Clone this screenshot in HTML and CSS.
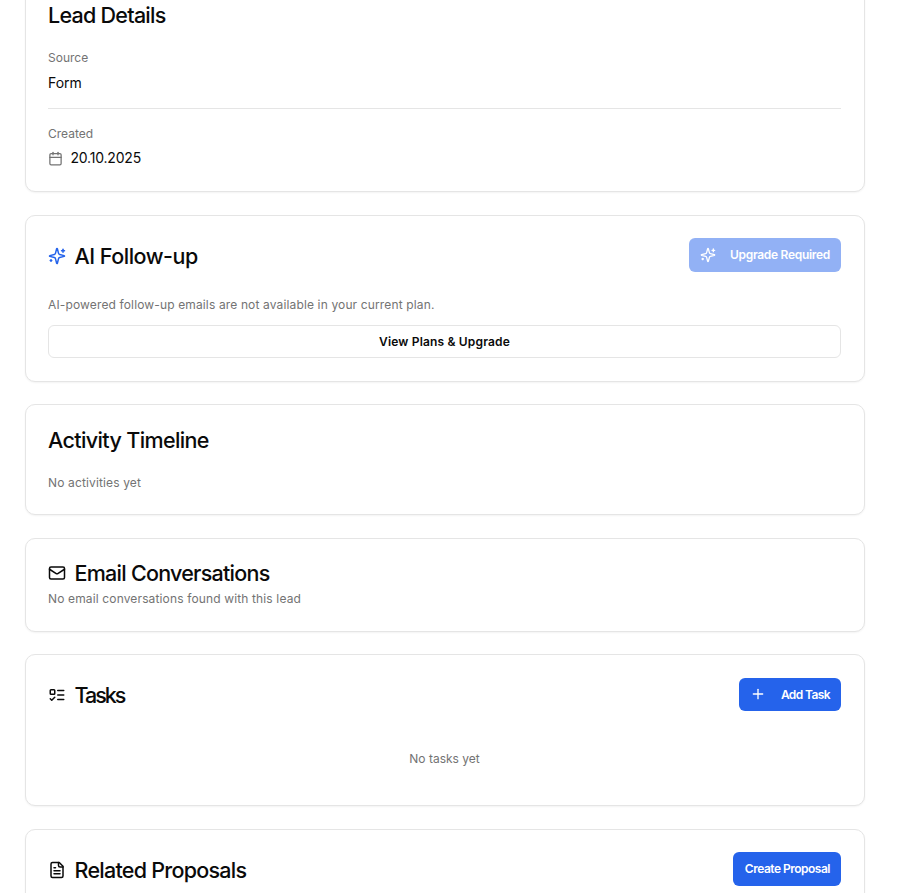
FILE: index.html
```html
<!DOCTYPE html>
<html lang="en">
<head>
<meta charset="utf-8">
<title>Lead</title>
<link rel="stylesheet" href="styles.css">
</head>
<body>
<main class="stack">
  <section class="card details">
    <h2 class="title">Lead Details</h2>
    <div class="field">
      <div class="label">Source</div>
      <div class="value">Form</div>
    </div>
    <hr class="rule">
    <div class="field">
      <div class="label second">Created</div>
      <div class="value date">
        <svg class="ico-date" viewBox="0 0 24 24" fill="none" stroke="currentColor" stroke-width="2" stroke-linecap="round" stroke-linejoin="round"><path d="M8 2v4"/><path d="M16 2v4"/><rect x="3" y="4" width="18" height="18" rx="2"/><path d="M3 10h18"/></svg>
        <span>20.10.2025</span>
      </div>
    </div>
  </section>

  <section class="card ai">
    <div class="head">
      <h2 class="title with-icon">
        <svg class="ico blue" viewBox="0 0 24 24" fill="none" stroke="currentColor" stroke-width="2" stroke-linecap="round" stroke-linejoin="round"><path d="M9.937 15.5A2 2 0 0 0 8.5 14.063l-6.135-1.582a.5.5 0 0 1 0-.962L8.5 9.936A2 2 0 0 0 9.937 8.5l1.582-6.135a.5.5 0 0 1 .963 0L14.063 8.5A2 2 0 0 0 15.5 9.937l6.135 1.581a.5.5 0 0 1 0 .964L15.5 14.063a2 2 0 0 0-1.437 1.437l-1.582 6.135a.5.5 0 0 1-.963 0z"/><path d="M20 3v4"/><path d="M22 5h-4"/><path d="M4 17v2"/><path d="M5 18H3"/></svg>
        <span class="ai-name">AI Follow-up</span>
      </h2>
      <button class="btn disabled" type="button">
        <svg class="ico-btn" viewBox="0 0 24 24" fill="none" stroke="currentColor" stroke-width="2" stroke-linecap="round" stroke-linejoin="round"><path d="M9.937 15.5A2 2 0 0 0 8.5 14.063l-6.135-1.582a.5.5 0 0 1 0-.962L8.5 9.936A2 2 0 0 0 9.937 8.5l1.582-6.135a.5.5 0 0 1 .963 0L14.063 8.5A2 2 0 0 0 15.5 9.937l6.135 1.581a.5.5 0 0 1 0 .964L15.5 14.063a2 2 0 0 0-1.437 1.437l-1.582 6.135a.5.5 0 0 1-.963 0z"/><path d="M20 3v4"/><path d="M22 5h-4"/><path d="M4 17v2"/><path d="M5 18H3"/></svg>
        <span>Upgrade Required</span>
      </button>
    </div>
    <p class="muted ai-text">AI-powered follow-up emails are not available in your current plan.</p>
    <button class="btn-outline" type="button">View Plans &amp; Upgrade</button>
  </section>

  <section class="card timeline">
    <h2 class="title">Activity Timeline</h2>
    <p class="muted timeline-text">No activities yet</p>
  </section>

  <section class="card email">
    <h2 class="title with-icon">
      <svg class="ico" viewBox="0 0 24 24" fill="none" stroke="currentColor" stroke-width="2" stroke-linecap="round" stroke-linejoin="round"><rect x="2" y="4" width="20" height="16" rx="2"/><path d="m22 7-8.97 5.7a1.94 1.94 0 0 1-2.06 0L2 7"/></svg>
      <span>Email Conversations</span>
    </h2>
    <p class="muted email-text">No email conversations found with this lead</p>
  </section>

  <section class="card tasks">
    <div class="head">
      <h2 class="title with-icon">
        <svg class="ico" viewBox="0 0 24 24" fill="none" stroke="currentColor" stroke-width="2" stroke-linecap="round" stroke-linejoin="round"><rect x="3" y="5" width="6" height="6" rx="1"/><path d="m3 17 2 2 4-4"/><path d="M13 6h8"/><path d="M13 12h8"/><path d="M13 18h8"/></svg>
        <span class="task-name">Tasks</span>
      </h2>
      <button class="btn add" type="button">
        <svg class="ico-btn" viewBox="0 0 24 24" fill="none" stroke="currentColor" stroke-width="2" stroke-linecap="round" stroke-linejoin="round"><path d="M5 12h14"/><path d="M12 5v14"/></svg>
        <span>Add Task</span>
      </button>
    </div>
    <p class="muted empty">No tasks yet</p>
  </section>

  <section class="card proposals">
    <div class="head">
      <h2 class="title with-icon">
        <svg class="ico" viewBox="0 0 24 24" fill="none" stroke="currentColor" stroke-width="2" stroke-linecap="round" stroke-linejoin="round"><path d="M15 2H6a2 2 0 0 0-2 2v16a2 2 0 0 0 2 2h12a2 2 0 0 0 2-2V7Z"/><path d="M14 2v4a2 2 0 0 0 2 2h4"/><path d="M10 9H8"/><path d="M16 13H8"/><path d="M16 17H8"/></svg>
        <span>Related Proposals</span>
      </h2>
      <button class="btn plain" type="button"><span>Create Proposal</span></button>
    </div>
  </section>
</main>
</body>
</html>
```

FILE: styles.css
```css
* { box-sizing: border-box; }
html, body { height: 100%; }
body {
  margin: 0;
  background: #fff;
  color: #0a0a0a;
  font-family: Inter, sans-serif;
  overflow: hidden;
}
.stack {
  display: flex;
  flex-direction: column;
  gap: 22.5px;
  width: 840px;
  margin: -24px 0 0 25px;
}
.card {
  background: #fff;
  border: 1px solid #e5e5e5;
  border-radius: 10px;
  box-shadow: 0 1px 2px rgba(0,0,0,.05);
  padding: 22px 23px 22px 22px;
  flex: none;
}
.title {
  margin: 0;
  font-size: 21.5px;
  line-height: 32px;
  font-weight: 550;
  letter-spacing: -0.74px;
  color: #0a0a0a;
}
.with-icon { display: flex; align-items: center; gap: 8.5px; }
.ico { width: 18px; height: 18px; flex: none; }
.blue { color: #2563eb; }
.head { display: flex; justify-content: space-between; align-items: center; }
.head .title { padding-top: 2px; height: 34px; }
.field { display: flex; flex-direction: column; }
.label { font-size: 12px; line-height: 16px; color: #737373; margin-bottom: 7px; }
.second { margin-bottom: 6px; }
.value { font-size: 14px; line-height: 20px; }
.details { height: 216.4px; }
.details .title { margin-bottom: 19px; }
.rule { border: 0; border-top: 1px solid #e5e5e5; margin: 15px 0 17px; }
.date { display: flex; align-items: center; gap: 7.5px; letter-spacing: -0.2px; }
.ico-date { width: 15px; height: 15px; color: #737373; }
.muted { margin: 0; font-size: 12px; line-height: 16px; color: #737373; letter-spacing: 0.14px; }
.btn {
  display: inline-flex;
  align-items: center;
  justify-content: center;
  height: 34px;
  padding: 0 11px;
  border: 0;
  border-radius: 6px;
  background: #2563eb;
  color: #fff;
  font-family: inherit;
  font-size: 12px;
  font-weight: 600;
  letter-spacing: -0.3px;
}
.ico-btn { width: 16px; height: 16px; flex: none; margin-right: 14px; }
.disabled { background: #92b1f5; }
.add { height: 33px; letter-spacing: -0.6px; }
.add .ico-btn { margin-right: 15px; }
.plain { letter-spacing: -0.5px; padding: 0 11px 0 12px; }
.ai { height: 167px; }
.ai-name { letter-spacing: -0.5px; }
.ai-text { margin-top: 25px; }
.btn-outline {
  display: block;
  width: 100%;
  height: 33px;
  margin-top: 12px;
  background: #fff;
  border: 1px solid #e5e5e5;
  border-radius: 6px;
  font-family: inherit;
  font-size: 12px;
  font-weight: 600;
  letter-spacing: 0.17px;
  color: #0a0a0a;
}
.timeline { height: 111px; padding-top: 19px; }
.timeline .title { letter-spacing: -0.62px; }
.timeline-text { margin-top: 19px; }
.email { height: 94px; padding-top: 18px; }
.email-text { margin-top: 2px; }
.tasks { height: 152px; }
.task-name { letter-spacing: -2px; }
.empty { margin-top: 40px; text-align: center; letter-spacing: 0; }
.proposals { height: 120px; }
```
